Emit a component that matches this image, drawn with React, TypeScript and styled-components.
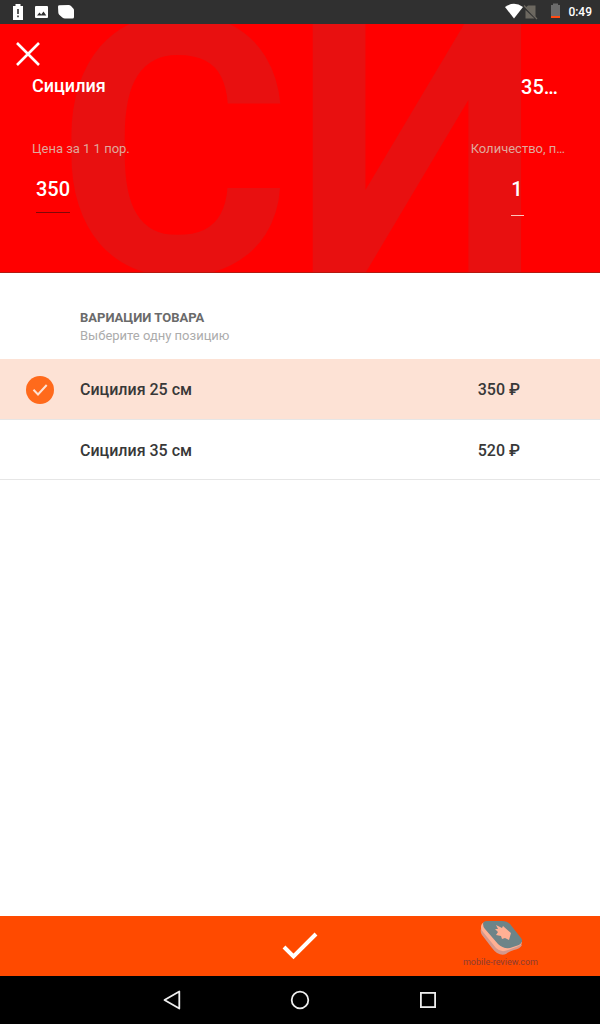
import React, { useState } from "react";
import styled, { createGlobalStyle } from "styled-components";

const GlobalStyle = createGlobalStyle`
  * { box-sizing: border-box; }
  body { margin: 0; background: #fff; font-family: Roboto, "Noto Sans", sans-serif; }
  button, input { font: inherit; color: inherit; border: 0; padding: 0; margin: 0; background: none; border-radius: 0; outline: none; }
  button { cursor: pointer; }
`;

const Screen = styled.div`
  display: flex;
  flex-direction: column;
  min-height: 100vh;
`;

const StatusBar = styled.div`
  display: flex;
  justify-content: space-between;
  align-items: center;
  height: 24px;
  padding: 0 8px 0 12px;
  background: #303030;
  color: #fff;
`;

const StatusGroup = styled.div<{ $gap: number }>`
  display: flex;
  align-items: center;
  gap: ${(p) => p.$gap}px;
`;

const Clock = styled.span`
  font-size: 12px;
  line-height: 16px;
  font-weight: 500;
`;

const Header = styled.header`
  position: relative;
  overflow: hidden;
  height: 249px;
  padding: 16px 32px 0;
  background: #ff0000;
  border-bottom: 1px solid #b41a10;
  color: #fff;
`;

const Backdrop = styled.div`
  position: absolute;
  inset: 0;
  display: flex;
  justify-content: center;
  align-items: center;
  padding-top: 4px;
  font-size: 360px;
  line-height: 250px;
  font-weight: 700;
  color: #e81010;
  white-space: nowrap;
  user-select: none;
`;

const HeaderContent = styled.div`
  position: relative;
`;

const CloseButton = styled.button`
  display: block;
  width: 28px;
  height: 28px;
  margin-left: -18px;
`;

const HeaderRow = styled.div`
  display: flex;
  justify-content: space-between;
`;

const TitleRow = styled(HeaderRow)`
  margin-top: 6px;
  padding-right: 10px;
  line-height: 24px;
  font-weight: 500;
`;

const Title = styled.h1`
  margin: 0;
  font-size: 18px;
  font-weight: 500;
`;

const Total = styled.span`
  font-size: 20px;
  line-height: 26px;
`;

const Fields = styled(HeaderRow)`
  margin-top: 39px;
  padding-right: 3px;
`;

const Field = styled.label<{ $center?: boolean }>`
  display: flex;
  flex-direction: column;
  align-items: ${(p) => (p.$center ? "center" : "flex-start")};
  gap: 18px;
  font-size: 13px;
  line-height: 20px;
  color: #e0a89c;
`;

const ValueInput = styled.input<{ $width: number; $line: string; $tall?: boolean }>`
  width: ${(p) => p.$width}px;
  height: ${(p) => (p.$tall ? 39 : 36)}px;
  padding-bottom: ${(p) => (p.$tall ? 14 : 11)}px;
  margin-left: ${(p) => (p.$tall ? 0 : 4)}px;
  border-bottom: 1px solid ${(p) => p.$line};
  font-size: 20px;
  line-height: 24px;
  font-weight: 500;
  color: #fff;
`;

const Main = styled.main`
  flex: 1;
`;

const Options = styled.fieldset`
  margin: 0;
  padding: 0;
  border: 0;
  min-width: 0;
`;

const Legend = styled.legend`
  width: 100%;
  padding: 36px 32px 14px 80px;
  font-size: 13px;
  line-height: 18px;
`;

const LegendTitle = styled.span`
  display: block;
  font-weight: 700;
  color: #6a6a6a;
`;

const LegendHint = styled.span`
  display: block;
  color: #acacac;
`;

const OptionRow = styled.label<{ $selected: boolean }>`
  display: flex;
  align-items: center;
  height: ${(p) => (p.$selected ? 61 : 60)}px;
  padding: 2px 80px 0 26px;
  border-bottom: 1px solid #e6e6e6;
  background: ${(p) => (p.$selected ? "#fde2d5" : "#fff")};
  color: #383838;
  font-size: 16px;
  line-height: 24px;
  font-weight: 500;
  cursor: pointer;
`;

const Radio = styled.input`
  appearance: none;
  width: 28px;
  height: 28px;
  margin-right: 26px;
  border-radius: 50%;
  &:checked {
    background: #ff6a1c;
  }
`;

const RadioSlot = styled.span`
  position: relative;
  display: flex;
`;

const RadioMark = styled.svg`
  position: absolute;
  left: 0;
  top: 0;
  pointer-events: none;
`;

const OptionName = styled.span`
  flex: 1;
`;

const ActionBar = styled.div`
  position: relative;
  display: flex;
  height: 60px;
  background: #ff4a00;
`;

const ConfirmButton = styled.button`
  flex: 1;
  display: flex;
  align-items: center;
  justify-content: center;
`;

const Watermark = styled.div`
  position: absolute;
  top: 5px;
  right: 62px;
  display: flex;
  flex-direction: column;
  align-items: center;
  font-size: 9px;
  line-height: 11px;
  color: #8c3c31;
  pointer-events: none;
`;

const NavBar = styled.nav`
  display: flex;
  justify-content: center;
  gap: 80px;
  height: 48px;
  background: #000;
`;

const NavButton = styled.button`
  display: flex;
  align-items: center;
  justify-content: center;
  width: 48px;
`;

const variations = [
  { id: "s25", name: "Сицилия 25 см", price: "350 ₽" },
  { id: "s35", name: "Сицилия 35 см", price: "520 ₽" },
];

export default function App() {
  const [selected, setSelected] = useState("s25");
  const [price, setPrice] = useState("350");
  const [count, setCount] = useState("1");

  return (
    <Screen>
      <GlobalStyle />
      <StatusBar>
        <StatusGroup $gap={10}>
          <svg width="12" height="18" viewBox="0 0 12 18">
            <path d="M1 3h2.500V1h5v2H11v14H1z" fill="#fff" />
            <path d="M5.200 6h1.600v5H5.200zM5.200 12.500h1.600v1.700H5.200z" fill="#303030" />
          </svg>
          <svg width="14" height="14" viewBox="0 0 14 14">
            <rect x="1" y="1" width="13" height="12" rx="1" fill="#fff" />
            <path d="M3 10.500 5.500 7.600l1.700 2L9.500 6.600l2.800 3.900z" fill="#303030" />
          </svg>
          <svg width="18" height="16" viewBox="0 0 18 16">
            <path d="M0 2.700Q0 1.300 1.500 1.300L10.500 1Q12 1 13 2L15.300 4.500Q16 5.200 16 6.500V13Q16 14.500 14.500 14.500H7Q5.500 14.500 4.300 13.500L1.500 11Q.4 10 .3 8.500z" fill="#fff" />
          </svg>
        </StatusGroup>
        <StatusGroup $gap={8}>
          <svg width="56" height="18" viewBox="0 0 56 18">
            <path d="M1 4.500Q10-1.800 19 4.500L10 16z" fill="#fff" transform="translate(0 -.5)" />
            <path d="M24 2.500h7.500V14L21.500 4.700zM21.500 7l9 8.500h-9z" fill="#6c6860" />
            <path d="M20 2.500 33 16" stroke="#6c6860" strokeWidth="1.200" />
            <path d="M47 2h2V.5h5V2h2v11h-9z" fill="#6b6b6b" />
            <path d="M47 13h9v2h-9z" fill="#ff4a12" />
          </svg>
          <Clock>0:49</Clock>
        </StatusGroup>
      </StatusBar>

      <Header>
        <Backdrop aria-hidden="true">СИ</Backdrop>
        <HeaderContent>
          <CloseButton aria-label="Закрыть">
            <svg width="28" height="28" viewBox="0 0 28 28">
              <path d="m3 3 22 22M25 3 3 25" stroke="#fff" strokeWidth="2.600" />
            </svg>
          </CloseButton>
          <TitleRow>
            <Title>Сицилия</Title>
            <Total>35…</Total>
          </TitleRow>
          <Fields>
            <Field>
              Цена за 1 1 пор.
              <ValueInput $width={34} $line="#800808" value={price} onChange={(e) => setPrice(e.target.value)} />
            </Field>
            <Field $center>
              Количество, п…
              <ValueInput $width={13} $line="#ffc4bc" $tall value={count} onChange={(e) => setCount(e.target.value)} />
            </Field>
          </Fields>
        </HeaderContent>
      </Header>

      <Main>
        <Options>
          <Legend>
            <LegendTitle>ВАРИАЦИИ ТОВАРА</LegendTitle>
            <LegendHint>Выберите одну позицию</LegendHint>
          </Legend>
          {variations.map((v) => (
            <OptionRow key={v.id} $selected={selected === v.id}>
              <RadioSlot>
                <Radio type="radio" name="variation" checked={selected === v.id} onChange={() => setSelected(v.id)} />
                {selected === v.id && (
                  <RadioMark width="28" height="28" viewBox="0 0 28 28">
                    <path d="m7.500 13.800 4.500 4.700L20.700 9" fill="none" stroke="#fde2d5" strokeWidth="2" />
                  </RadioMark>
                )}
              </RadioSlot>
              <OptionName>{v.name}</OptionName>
              <span>{v.price}</span>
            </OptionRow>
          ))}
        </Options>
      </Main>

      <ActionBar>
        <ConfirmButton aria-label="Подтвердить">
          <svg width="36" height="30" viewBox="0 0 36 30">
            <path d="m2 16 9.500 9.500L34 3" fill="none" stroke="#fff" strokeWidth="4" />
          </svg>
        </ConfirmButton>
        <Watermark>
          <svg width="48" height="36" viewBox="-4 0 48 36">
            <path d="M1 8Q1 4 6 2L38 20 42 24Q40 28 34 29 28 31 26 33 22 35 17 32 15 31 12 27L2 14Q0 11 1 8Z" fill="#d4988c" />
            <path d="M1 6Q1 2 5 1L42 21Q42 24 36 26L28 29Q21 32 16 27L3 11Q1 9 1 6Z" fill="#ffb094" />
            <path d="M3 3Q3 0 7 0H22Q27 0 30 3L41 17Q44 21 39 24L30 27Q23 28 18 23L5 8Q3 6 3 3Z" fill="#6d8488" />
            <path d="m16 4 6 3 1-2 8 7-2 7-4-2-3 1-1-3-5-1 2-3-3-3 3 0z" fill="#ffb094" />
          </svg>
          mobile-review.com
        </Watermark>
      </ActionBar>

      <NavBar>
        <NavButton aria-label="Назад">
          <svg width="20" height="20" viewBox="0 0 20 20">
            <path d="M17.300 1.500v17L2.500 10z" fill="none" stroke="#eee" strokeWidth="1.800" strokeLinejoin="round" />
          </svg>
        </NavButton>
        <NavButton aria-label="Домой">
          <svg width="20" height="20" viewBox="0 0 20 20">
            <circle cx="10" cy="10" r="8.300" fill="none" stroke="#eee" strokeWidth="1.800" />
          </svg>
        </NavButton>
        <NavButton aria-label="Обзор">
          <svg width="20" height="20" viewBox="0 0 20 20">
            <rect x="2.900" y="2.900" width="14.200" height="14.200" fill="none" stroke="#eee" strokeWidth="1.800" />
          </svg>
        </NavButton>
      </NavBar>
    </Screen>
  );
}
